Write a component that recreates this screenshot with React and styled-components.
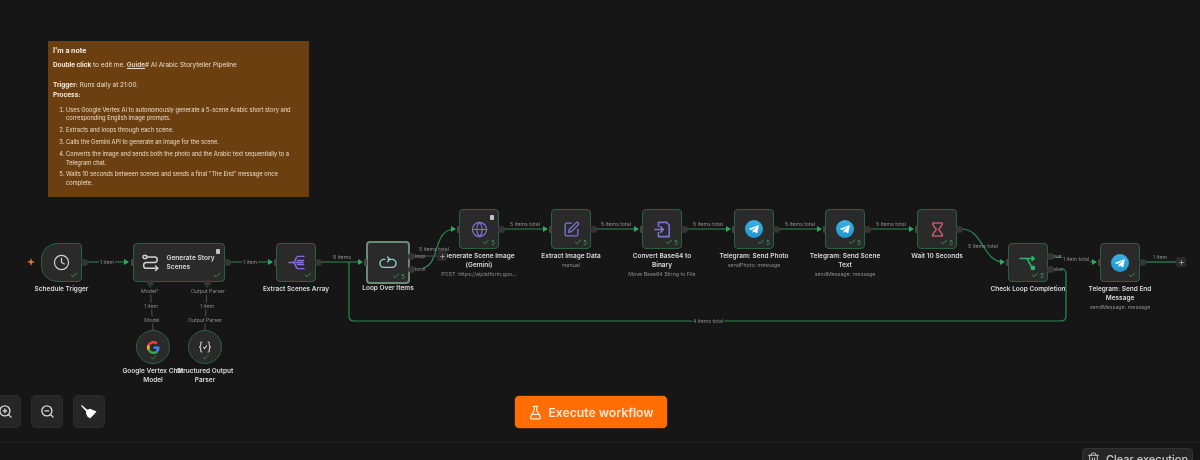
import React from 'react';
import styled, { createGlobalStyle } from 'styled-components';
import { Clock, Globe, SquarePen, FlaskConical, ZoomIn, ZoomOut, Trash2, Plus, Check } from 'lucide-react';

const Global = createGlobalStyle`
  html, body { margin: 0; padding: 0; background: #161616; }
  * { box-sizing: border-box; }
`;

const Page = styled.div`
  width: 1200px;
  height: 460px;
  display: flex;
  flex-direction: column;
  overflow: hidden;
  background: #161616;
  font-family: Inter, 'Liberation Sans', sans-serif;
  filter: blur(0.5px);
`;

const Canvas = styled.div`
  position: relative;
  height: 442px;
  flex: none;
`;

const Edges = styled.svg`
  position: absolute;
  inset: 0;
  pointer-events: none;
`;

const Note = styled.div`
  position: absolute;
  left: 48px;
  top: 41px;
  width: 261px;
  height: 156px;
  padding: 5px 5px;
  background: #6c3f10;
  color: #e9dccb;
  font-size: 5.75px;
  line-height: 9px;
`;

const NoteTitle = styled.div`
  font-size: 7px;
  font-weight: 700;
  color: #f4ebe0;
`;

const NoteLine = styled.p`
  margin: ${p => p.$gap}px 0 0;
  font-size: 6.4px;
  strong { font-weight: 700; color: #f4ebe0; }
  u { font-weight: 600; }
`;

const NoteList = styled.ol`
  margin: 6px 0 0;
  padding: 0 12px 0 13px;
  li { margin-bottom: 3.5px; line-height: 8.4px; padding-left: 0; }
  li::marker { font-size: 5.75px; }
`;

const Card = styled.div`
  position: absolute;
  left: ${p => p.$x}px;
  top: ${p => p.$y}px;
  width: ${p => p.$w}px;
  height: ${p => p.$h}px;
  display: flex;
  align-items: center;
  justify-content: center;
  gap: 7px;
  background: #2a2a2a;
  border: ${p => (p.$active ? '2.5px solid #6a8a76' : '1.5px solid #2a6240')};
  border-radius: ${p => (p.$trigger ? '16px 4px 4px 16px' : '4px')};
`;

const RoundCard = styled(Card)`
  border-radius: 50%;
  border-width: 1.5px;
`;

const CardTitle = styled.div`
  width: 50px;
  font-size: 6.6px;
  line-height: 8.5px;
  font-weight: 600;
  color: #d8d8d8;
`;

const Caption = styled.div`
  position: absolute;
  top: calc(100% + ${p => (p.$active ? 2 : 4)}px);
  left: 50%;
  width: ${p => p.$width || 84}px;
  transform: translateX(-50%);
  text-align: center;
  color: #d8d8d8;
  font-size: 6.5px;
  line-height: 9px;
  font-weight: 600;
`;

const SubCaption = styled.div`
  color: #8c8c8c;
  font-size: 5.3px;
  line-height: 8px;
  font-weight: 400;
  white-space: nowrap;
`;

const Status = styled.div`
  position: absolute;
  right: ${p => (p.$center ? 12 : 3)}px;
  bottom: 2px;
  display: flex;
  align-items: center;
  gap: 1px;
  color: #3ca768;
  font-size: 6px;
  line-height: 7px;
`;

const PinTag = styled.div`
  position: absolute;
  right: 4px;
  top: 5px;
  width: 4px;
  height: 5px;
  border-radius: 1px;
  background: #c4c4c4;
`;

const OutHandle = styled.div`
  position: absolute;
  left: ${p => p.$x - 3.5}px;
  top: ${p => p.$y - 3.5}px;
  width: 7px;
  height: 7px;
  border-radius: 50%;
  background: #353535;
`;

const InHandle = styled.div`
  position: absolute;
  left: ${p => p.$x - 1.5}px;
  top: ${p => p.$y - 3.5}px;
  width: 3px;
  height: 7px;
  border-radius: 1px;
  background: #444444;
`;

const EdgeLabel = styled.div`
  position: absolute;
  left: ${p => p.$x}px;
  top: ${p => p.$y}px;
  transform: translate(-50%, -50%);
  padding: 0 1px;
  background: ${p => (p.$bare ? 'transparent' : '#161616')};
  color: #8d8d8d;
  font-size: 5.2px;
  line-height: 7px;
  white-space: nowrap;
`;

const AddButton = styled.div`
  position: absolute;
  left: ${p => p.$x - 5}px;
  top: ${p => p.$y - 5}px;
  width: 10px;
  height: 10px;
  display: flex;
  align-items: center;
  justify-content: center;
  border-radius: 2px;
  background: #2a2a2a;
  color: #cfcfcf;
`;

const Spark = styled.svg`
  position: absolute;
  left: 27px;
  top: 258px;
`;

const ToolRow = styled.div`
  position: absolute;
  left: -11px;
  top: 395px;
  display: flex;
  gap: 10px;
`;

const ToolButton = styled.div`
  width: 32px;
  height: 33px;
  display: flex;
  align-items: center;
  justify-content: center;
  background: #262626;
  border: 1px solid #2c2c2c;
  border-radius: 5px;
  color: #d6d6d6;
`;

const ExecuteButton = styled.button`
  position: absolute;
  left: 514px;
  top: 395px;
  width: 154px;
  height: 34px;
  display: flex;
  align-items: center;
  justify-content: center;
  gap: 5px;
  padding: 0;
  background: #ff6d04;
  border: 1px solid #4a2205;
  border-radius: 5px;
  color: #ffe6d2;
  font-family: inherit;
  font-size: 12.2px;
  font-weight: 600;
`;

const BottomBar = styled.div`
  flex: 1;
  display: flex;
  justify-content: flex-end;
  padding: 5px 7px 0 0;
  background: #151515;
  border-top: 1.5px solid #242424;
`;

const ClearButton = styled.button`
  width: 111px;
  height: 26px;
  display: flex;
  align-items: flex-start;
  justify-content: center;
  gap: 6px;
  padding: 3px 0 0;
  background: #262626;
  border: 1px solid #333333;
  border-radius: 4px;
  color: #c8c8c8;
  font-family: inherit;
  font-size: 11px;
  line-height: 14px;
  font-weight: 500;
`;

const purple = '#7f72d6';

const ChainIcon = () => (
  <svg width="18" height="18" viewBox="0 0 18 18" fill="none" stroke="#d4d4d4" strokeWidth="1.4" strokeLinecap="round" strokeLinejoin="round">
    <rect x="1" y="1.5" width="4" height="3" rx="1.2" />
    <path d="M5 3h7.5a2.7 2.7 0 0 1 0 5.5h-8a2.9 2.9 0 0 0 0 5.8H15" />
    <path d="M13.500 12l2.500 2.300-2.500 2.300" />
  </svg>
);

const SplitIcon = () => (
  <svg width="17" height="17" viewBox="0 0 18 18" fill="none" stroke="#8a6fd8" strokeWidth="1.5" strokeLinecap="round" strokeLinejoin="round">
    <path d="M1 9h5.500" />
    <path d="M6 9c2 0 1.600-6 4.500-6.500H17" />
    <path d="M6 9c2 0 1.600 6 4.500 6.500H17" />
    <path d="M10 6.800h6.500M10 11.200h6.500M8.500 9H16" />
  </svg>
);

const LoopIcon = () => (
  <svg width="18" height="16" viewBox="0 0 22 20" fill="none" stroke="#8fd0c0" strokeWidth="1.8" strokeLinecap="round" strokeLinejoin="round">
    <path d="M7 5.500H6a5 5 0 0 0 0 10h10a5 5 0 0 0 0-10h-4.500" />
    <path d="M10.500 2.500l2.500 3-2.500 3" />
  </svg>
);

const ConvertIcon = () => (
  <svg width="17" height="17" viewBox="0 0 19 19" fill="none" stroke={purple} strokeWidth="1.8" strokeLinecap="round" strokeLinejoin="round">
    <path d="M5 6V1.500h9l3 3V17.500H5V13" />
    <path d="M1 9.500h9M7.500 6.500l3 3-3 3" />
  </svg>
);

const TelegramIcon = () => (
  <svg width="18" height="18" viewBox="0 0 24 24">
    <defs>
      <linearGradient id="tg" x1="0.5" y1="0" x2="0.5" y2="1">
        <stop offset="0" stopColor="#3cb0e6" />
        <stop offset="1" stopColor="#1f96d2" />
      </linearGradient>
    </defs>
    <circle cx="12" cy="12" r="12" fill="url(#tg)" />
    <path fill="#ffffff" d="M5.500 11.800 17.500 7c.6-.2 1 .2.900.9L16.400 17c-.1.600-.6.800-1.100.5l-3.100-2.300-1.500 1.500c-.2.200-.4.300-.7.300l.2-3L15.700 9c.2-.2 0-.3-.3-.1l-6.800 4.300-3-.9c-.6-.2-.6-.5-.1-.5z" />
  </svg>
);

const HourglassIcon = () => (
  <svg width="13" height="15" viewBox="0 0 16 18" fill="none" stroke="#c0566f" strokeWidth="2" strokeLinejoin="round">
    <path d="M2 1h12c0 4-3.500 5.500-4.500 8 1 2.500 4.500 4 4.500 8H2c0-4 3.500-5.500 4.500-8C5.500 6.500 2 5 2 1z" />
  </svg>
);

const BranchIcon = () => (
  <svg width="18" height="16" viewBox="0 0 20 18" fill="none" stroke="#2fb56b" strokeWidth="1.800" strokeLinecap="round" strokeLinejoin="round">
    <path d="M1 4h7c2 0 2 2 3 4l3 5" />
    <path d="M8 4h9M14.500 1.800 17 4l-2.500 2.200" />
    <circle cx="15.500" cy="14.500" r="1.800" fill="#2fb56b" />
  </svg>
);

const GoogleIcon = () => (
  <svg width="13" height="13" viewBox="0 0 48 48">
    <path fill="#EA4335" d="M24 9.500c3.500 0 6.700 1.300 9.100 3.500l6.800-6.800C35.800 2.400 30.200 0 24 0 14.600 0 6.500 5.400 2.600 13.200l7.900 6.200C12.400 13.700 17.700 9.500 24 9.500z" />
    <path fill="#4285F4" d="M46.100 24.500c0-1.600-.1-3.100-.4-4.500H24v9h12.400c-.5 2.900-2.200 5.400-4.600 7l7.200 5.600c4.200-3.900 7.100-9.600 7.100-17.100z" />
    <path fill="#FBBC05" d="M10.500 28.600c-.5-1.400-.8-3-.8-4.600s.3-3.200.8-4.600l-7.900-6.200C.9 16.500 0 20.100 0 24s.9 7.500 2.600 10.800l7.900-6.200z" />
    <path fill="#34A853" d="M24 48c6.500 0 11.900-2.100 15.900-5.800l-7.200-5.600c-2.200 1.500-5 2.400-8.700 2.400-6.300 0-11.600-4.200-13.500-9.900l-7.900 6.200C6.500 42.600 14.600 48 24 48z" />
  </svg>
);

const ParserIcon = () => (
  <svg width="14" height="14" viewBox="0 0 18 18" fill="none" stroke="#d2d2d2" strokeWidth="1.400" strokeLinecap="round" strokeLinejoin="round">
    <path d="M5 2.500c-2 0-1.500 2-1.500 3.500S3 8.500 2 9c1 .5 1.500 1.500 1.500 3s-.5 3.500 1.500 3.500" />
    <path d="M13 2.500c2 0 1.500 2 1.500 3.500s.5 2.500 1.500 3c-1 .5-1.500 1.500-1.500 3s.5 3.500-1.500 3.500" />
    <path d="M7 9.500l1.500 1.500L11 7.500" />
  </svg>
);

const BroomIcon = () => (
  <svg width="16" height="14" viewBox="0 0 16 14" fill="#ffffff">
    <path d="M0 .8.800 0 6.500 5 5.200 6.500z" />
    <path d="M5.500 5 9 3.800 15.500 6.500 13 9.500 9 13.500 6.500 11.500 5 8.500z" />
  </svg>
);

const NODES = [
  { x: 41, y: 243, w: 41, h: 39, label: 'Schedule Trigger', icon: <Clock size={17} color="#d4d4d4" strokeWidth={1.7} />, trigger: true },
  { x: 133, y: 243, w: 92, h: 39, icon: <ChainIcon />, title: 'Generate Story Scenes', pin: true },
  { x: 276, y: 243, w: 40, h: 39, label: 'Extract Scenes Array', icon: <SplitIcon /> },
  { x: 366, y: 241, w: 44, h: 43, label: 'Loop Over Items', icon: <LoopIcon />, active: true, count: 5 },
  { x: 459, y: 209, w: 40, h: 40, label: 'Generate Scene Image (Gemini)', sub: 'POST: https://aiplatform.goo...', icon: <Globe size={17} color={purple} strokeWidth={1.7} />, count: 5, pin: true },
  { x: 551, y: 209, w: 40, h: 40, label: 'Extract Image Data', sub: 'manual', icon: <SquarePen size={17} color={purple} strokeWidth={1.9} />, count: 5 },
  { x: 642, y: 209, w: 40, h: 40, label: 'Convert Base64 to Binary', sub: 'Move Base64 String to File', icon: <ConvertIcon />, count: 5, width: 70 },
  { x: 734, y: 209, w: 40, h: 40, label: 'Telegram: Send Photo', sub: 'sendPhoto: message', icon: <TelegramIcon />, count: 5 },
  { x: 825, y: 209, w: 40, h: 40, label: 'Telegram: Send Scene Text', sub: 'sendMessage: message', icon: <TelegramIcon />, count: 5, width: 76 },
  { x: 917, y: 209, w: 40, h: 40, label: 'Wait 10 Seconds', icon: <HourglassIcon />, count: 5 },
  { x: 1008, y: 243, w: 40, h: 39, label: 'Check Loop Completion', icon: <BranchIcon />, count: 5 },
  { x: 1100, y: 243, w: 40, h: 39, label: 'Telegram: Send End Message', sub: 'sendMessage: message', icon: <TelegramIcon />, width: 68 },
];

const SUBNODES = [
  { x: 136, label: 'Google Vertex Chat Model', icon: <GoogleIcon /> },
  { x: 188, label: 'Structured Output Parser', icon: <ParserIcon /> },
];

const LINES = [
  'M86 262H128',
  'M229 262H272',
  'M321 262H362',
  'M423 268C441 264 432 229 455 229',
  'M503 229H547',
  'M595 229H638',
  'M686 229H730',
  'M778 229H821',
  'M869 229H913',
  'M961 229C984 229 982 262 1004 262',
  'M1052 257C1070 257 1078 262 1096 262',
  'M1144 262H1176',
  'M1062 269Q1066 269 1066 274V316Q1066 321 1061 321H354Q349 321 349 316V262',
];

const ARROWS = [[128, 262], [272, 262], [362, 262], [455, 229], [547, 229], [638, 229], [730, 229], [821, 229], [913, 229], [1004, 262], [1096, 262]];

const OUT_HANDLES = [
  [84, 262], [227, 262], [318, 262], [501, 229], [593, 229], [684, 229], [776, 229], [867, 229], [959, 229], [1142, 262],
  [411, 256], [411, 269], [1050, 256], [1050, 269], [150, 282], [207, 282],
];

const IN_HANDLES = [
  [132, 262], [275, 262], [365, 262], [458, 229], [550, 229], [641, 229], [733, 229], [824, 229], [916, 229], [1007, 262], [1099, 262],
];

const LABELS = [
  { x: 107, y: 262, text: '1 item' },
  { x: 250, y: 262, text: '1 item' },
  { x: 342, y: 257, text: '5 items', bare: true },
  { x: 434, y: 249, text: '5 items total', bare: true },
  { x: 420, y: 256, text: 'loop', bare: true },
  { x: 419, y: 269, text: 'done', bare: true },
  { x: 525, y: 224, text: '5 items total', bare: true },
  { x: 616, y: 224, text: '5 items total', bare: true },
  { x: 708, y: 224, text: '5 items total', bare: true },
  { x: 800, y: 224, text: '5 items total', bare: true },
  { x: 891, y: 224, text: '5 items total', bare: true },
  { x: 983, y: 246, text: '5 items total', bare: true },
  { x: 1057, y: 256, text: 'true', bare: true },
  { x: 1076, y: 259, text: '1 item total' },
  { x: 1057, y: 269, text: 'false', bare: true },
  { x: 1160, y: 257, text: '1 item', bare: true },
  { x: 708, y: 321, text: '4 items total' },
  { x: 150, y: 291, text: 'Model*' },
  { x: 151, y: 306, text: '1 item' },
  { x: 152, y: 320, text: 'Model' },
  { x: 208, y: 291, text: 'Output Parser' },
  { x: 207, y: 306, text: '1 item' },
  { x: 205, y: 320, text: 'Output Parser' },
];

export default function App() {
  return (
    <Page>
      <Global />
      <Canvas>
        <Note>
          <NoteTitle>I'm a note</NoteTitle>
          <NoteLine $gap={6}><strong>Double click</strong> to edit me. <u>Guide</u># AI Arabic Storyteller Pipeline</NoteLine>
          <NoteLine $gap={11}><strong>Trigger:</strong> Runs daily at 21:00.</NoteLine>
          <NoteLine $gap={1}><strong>Process:</strong></NoteLine>
          <NoteList>
            <li>Uses Google Vertex AI to autonomously generate a 5-scene Arabic short story and corresponding English image prompts.</li>
            <li>Extracts and loops through each scene.</li>
            <li>Calls the Gemini API to generate an image for the scene.</li>
            <li>Converts the image and sends both the photo and the Arabic text sequentially to a Telegram chat.</li>
            <li>Waits 10 seconds between scenes and sends a final "The End" message once complete.</li>
          </NoteList>
        </Note>

        <Edges width="1200" height="442" fill="none">
          <g stroke="#2a8a50" strokeWidth="1.2">
            {LINES.map(d => <path key={d} d={d} />)}
          </g>
          <path d="M150 285L153 330M207 285L205 330" stroke="#3f5d4b" strokeWidth="1" />
          <path d="M414 256H438" stroke="#555555" strokeWidth="1" />
          {ARROWS.map(([x, y]) => (
            <path key={x} d={`M${x - 4} ${y - 3}L${x + 1} ${y}L${x - 4} ${y + 3}z`} fill="#2fa862" />
          ))}
        </Edges>

        {LABELS.map(l => (
          <EdgeLabel key={`${l.x}-${l.y}`} $x={l.x} $y={l.y} $bare={l.bare}>{l.text}</EdgeLabel>
        ))}

        {NODES.map(n => (
          <Card key={n.x} $x={n.x} $y={n.y} $w={n.w} $h={n.h} $active={n.active} $trigger={n.trigger}>
            {n.icon}
            {n.title && <CardTitle>{n.title}</CardTitle>}
            {n.pin && <PinTag />}
            <Status>
              <Check size={8} strokeWidth={2.4} />
              {n.count}
            </Status>
            {n.label && (
              <Caption $width={n.width} $active={n.active}>
                {n.label}
                {n.sub && <SubCaption>{n.sub}</SubCaption>}
              </Caption>
            )}
          </Card>
        ))}

        {SUBNODES.map(n => (
          <RoundCard key={n.x} $x={n.x} $y={330} $w={34} $h={34}>
            {n.icon}
            <Status $center>
              <Check size={7} strokeWidth={2.4} />
            </Status>
            <Caption $width={74}>{n.label}</Caption>
          </RoundCard>
        ))}

        {OUT_HANDLES.map(([x, y]) => <OutHandle key={`${x}-${y}`} $x={x} $y={y} />)}
        {IN_HANDLES.map(([x, y]) => <InHandle key={`${x}-${y}`} $x={x} $y={y} />)}

        <AddButton $x={442} $y={256}><Plus size={7} strokeWidth={2} /></AddButton>
        <AddButton $x={1181} $y={262}><Plus size={7} strokeWidth={2} /></AddButton>

        <Spark width="8" height="8" viewBox="0 0 8 8">
          <path d="M4 0 5 3 8 4 5 5 4 8 3 5 0 4 3 3z" fill="#e8792b" />
        </Spark>

        <ToolRow>
          <ToolButton><ZoomIn size={15} strokeWidth={2.2} /></ToolButton>
          <ToolButton><ZoomOut size={15} strokeWidth={2.2} /></ToolButton>
          <ToolButton><BroomIcon /></ToolButton>
        </ToolRow>

        <ExecuteButton>
          <FlaskConical size={15} strokeWidth={2} />
          Execute workflow
        </ExecuteButton>
      </Canvas>

      <BottomBar>
        <ClearButton>
          <Trash2 size={13} strokeWidth={1.8} />
          Clear execution
        </ClearButton>
      </BottomBar>
    </Page>
  );
}
